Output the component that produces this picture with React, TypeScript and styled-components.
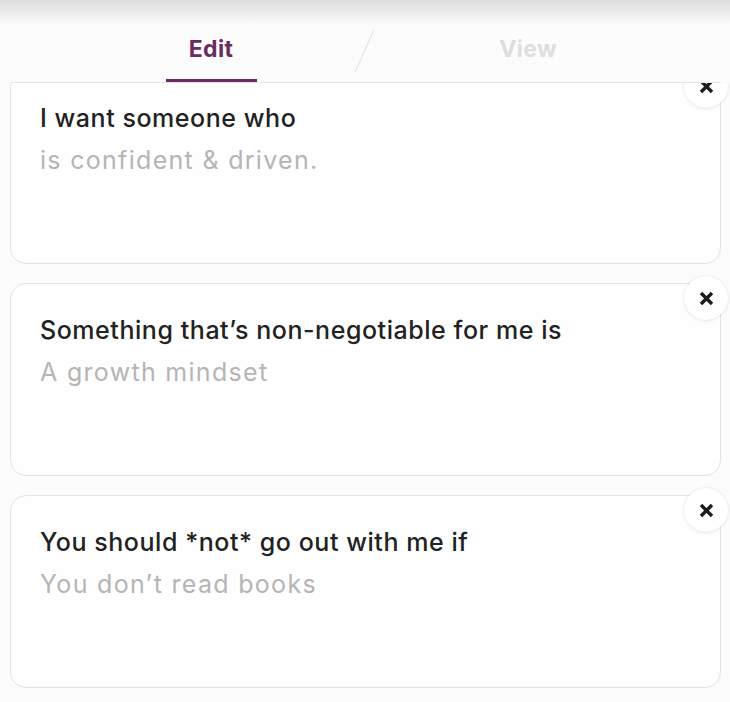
import React from 'react';
import styled, { createGlobalStyle } from 'styled-components';

interface Prompt {
  question: string;
  answer: string;
}

const prompts: Prompt[] = [
  { question: 'I want someone who', answer: 'is confident & driven.' },
  { question: 'Something that’s non-negotiable for me is', answer: 'A growth mindset' },
  { question: 'You should *not* go out with me if', answer: 'You don’t read books' },
];

const GlobalStyle = createGlobalStyle`
  html, body {
    margin: 0;
    padding: 0;
    background: #fcfcfc;
  }
  body {
    font-family: 'Inter', 'Noto Sans', sans-serif;
    -webkit-font-smoothing: antialiased;
  }
`;

const Screen = styled.div`
  width: 730px;
  height: 702px;
  display: flex;
  flex-direction: column;
  overflow: hidden;
  background: #fcfcfc;
`;

const StatusShade = styled.div`
  height: 26px;
  background: linear-gradient(180deg, #dcdcdc 0%, #efefef 55%, #fcfcfc 100%);
`;

const TabRow = styled.div`
  height: 57px;
  display: flex;
  justify-content: center;
  align-items: stretch;
  margin: 0 9px 0 10px;
  padding-left: 8px;
  border-bottom: 1px solid #e6e6e6;
  box-sizing: border-box;
`;

const Tab = styled.div<{ $active?: boolean }>`
  width: 91px;
  display: flex;
  flex-direction: column;
  align-items: center;
  padding-top: 10px;
  font-size: 23px;
  line-height: 26px;
  font-weight: 700;
  letter-spacing: 0.3px;
  color: ${({ $active }) => ($active ? '#6a2c5e' : '#dedede')};

  &::after {
    content: '';
    margin-top: auto;
    width: 100%;
    height: 3px;
    background: ${({ $active }) => ($active ? '#6a2c5e' : 'transparent')};
  }
`;

const Slash = styled.div`
  width: 20px;
  margin: 0 108px 0 98px;
  display: flex;
  justify-content: center;
  align-items: flex-start;

  &::before {
    content: '';
    width: 1px;
    height: 46px;
    margin-top: 2px;
    background: #e2e2e2;
    transform: rotate(24deg);
  }
`;

const ScrollArea = styled.div`
  flex: 1;
  overflow: hidden;
  display: flex;
  flex-direction: column;
  gap: 19px;
  padding: 0 9px 0 10px;
`;

const Card = styled.div<{ $first?: boolean }>`
  position: relative;
  flex-shrink: 0;
  height: 193px;
  box-sizing: border-box;
  margin-top: ${({ $first }) => ($first ? '-12px' : '0')};
  padding: 29px 29px 0;
  border: 1px solid #e3e3e3;
  border-radius: 16px;
  background: #fefefe;
`;

const Question = styled.div`
  font-size: 25px;
  line-height: 34px;
  font-weight: 500;
  color: #222222;
  letter-spacing: 0.55px;
`;

const Answer = styled.div`
  margin-top: 8px;
  font-size: 25px;
  line-height: 34px;
  font-weight: 400;
  color: #b5b5b5;
  letter-spacing: 1.3px;
`;

const RemoveButton = styled.button`
  position: absolute;
  top: -8px;
  right: -8px;
  width: 44px;
  height: 44px;
  padding: 0;
  border: none;
  border-radius: 50%;
  background: #ffffff;
  box-shadow: 0 0 0 1px rgba(0, 0, 0, 0.03), 0 1px 4px rgba(0, 0, 0, 0.07);
  display: flex;
  align-items: center;
  justify-content: center;
  cursor: pointer;
`;

const CloseIcon = () => (
  <svg width="15" height="15" viewBox="0 0 15 15" fill="none">
    <path d="M2 2L13 13M13 2L2 13" stroke="#1c1c1c" strokeWidth="3.4" />
  </svg>
);

export default function App() {
  return (
    <>
      <GlobalStyle />
      <Screen>
        <StatusShade />
        <TabRow>
          <Tab $active>Edit</Tab>
          <Slash />
          <Tab>View</Tab>
        </TabRow>
        <ScrollArea>
          {prompts.map((p, i) => (
            <Card key={p.question} $first={i === 0}>
              <Question>{p.question}</Question>
              <Answer>{p.answer}</Answer>
              <RemoveButton aria-label="Remove prompt">
                <CloseIcon />
              </RemoveButton>
            </Card>
          ))}
        </ScrollArea>
      </Screen>
    </>
  );
}
